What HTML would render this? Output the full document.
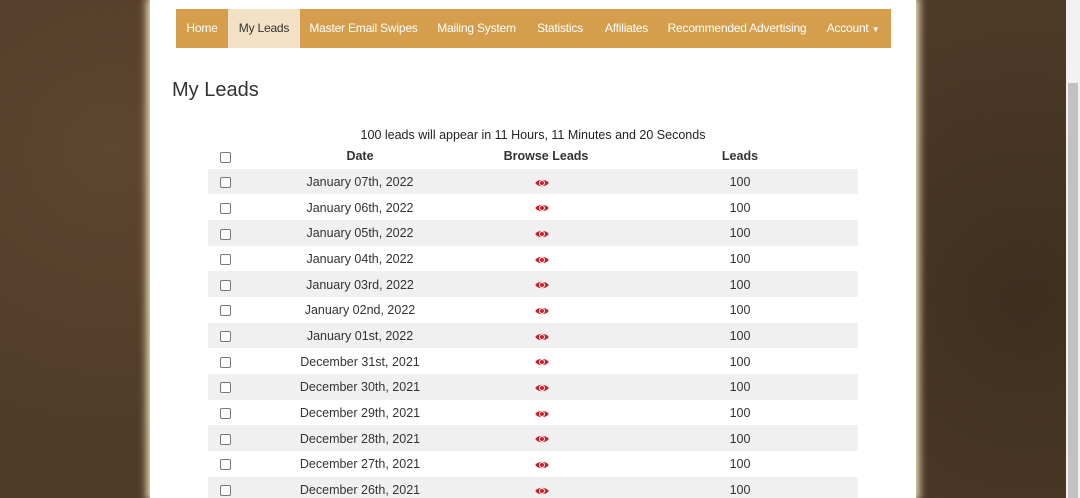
<!DOCTYPE html>
<html><head><style>
html,body{margin:0;height:498px;overflow:hidden;font-family:"Liberation Sans",sans-serif;}
body{background:#4f3b28;background-image:radial-gradient(circle at 10% 30%,#5e4630 0,transparent 30%),radial-gradient(circle at 95% 60%,#3f2e1f 0,transparent 30%);position:relative;width:1080px;}
.sb{position:absolute;left:1066px;top:0;width:14px;height:498px;background:#f1f1f1}
.sb .th{position:absolute;left:2px;top:83px;width:10px;height:415px;background:#c1c1c1}
.panel{position:absolute;left:150px;top:0;width:766px;height:498px;background:#fff;box-shadow:0 0 8px 3px #fbecc4;}
.nav{position:absolute;left:26px;top:9px;width:715px;height:39px;background:#d59e4d;font-size:12px;letter-spacing:-0.2px;color:#fff;}
.nav div{position:absolute;top:0;line-height:39px;white-space:nowrap;text-align:center}
.nav .act{background:#f3e1c6;color:#333}
h1{position:absolute;left:22px;top:79px;margin:0;font-weight:normal;font-size:20px;color:#333}
.note{position:absolute;left:58px;top:128px;width:650px;text-align:center;font-size:12.5px;color:#222}
table{position:absolute;left:58px;top:143px;width:650px;border-collapse:collapse;font-size:12.5px;color:#333}
td,th{height:25.67px;padding:1px 0 0;box-sizing:border-box;text-align:center}
th{font-weight:bold}
tr.g td{background:#f0f0f0}
.cb{display:inline-block;width:9px;height:9px;border:1px solid #777;border-radius:2px;background:#fff;vertical-align:middle}
</style></head><body>
<div class="panel">
<div class="nav">
<div style="left:0;width:52px">Home</div>
<div class="act" style="left:52px;width:72px">My Leads</div>
<div style="left:124px;width:127px">Master Email Swipes</div>
<div style="left:251px;width:99px">Mailing System</div>
<div style="left:350px;width:68px">Statistics</div>
<div style="left:418px;width:65px">Affiliates</div>
<div style="left:483px;width:156px">Recommended Advertising</div>
<div style="left:639px;width:76px">Account <span style="font-size:8px">▼</span></div>
</div>
<h1>My Leads</h1>
<div class="note">100 leads will appear in 11 Hours, 11 Minutes and 20 Seconds</div>
<table id="t">
<colgroup><col style="width:34px"><col style="width:236px"><col style="width:136px"><col style="width:244px"></colgroup>
<tr><th><span class="cb"></span></th><th>Date</th><th>Browse Leads</th><th style="padding-left:8px">Leads</th></tr>
</table>
</div>
<div class="sb"><div class="th"></div></div>
<script>
var d=["January 07th, 2022","January 06th, 2022","January 05th, 2022","January 04th, 2022","January 03rd, 2022","January 02nd, 2022","January 01st, 2022","December 31st, 2021","December 30th, 2021","December 29th, 2021","December 28th, 2021","December 27th, 2021","December 26th, 2021"];
var eye='<svg width="14" height="10" viewBox="0 0 14 10" style="vertical-align:middle;margin-left:-8px"><path d="M0.3 5C2.5 0.8 11.5 0.8 13.7 5C11.5 9.2 2.5 9.2 0.3 5Z" fill="#c9202a"/><circle cx="7" cy="5" r="3" fill="#fff"/><circle cx="7" cy="5" r="2" fill="#c9202a"/></svg>';
var h='';
d.forEach(function(x,i){h+='<tr'+(i%2==0?' class="g"':'')+'><td><span class="cb"></span></td><td>'+x+'</td><td>'+eye+'</td><td style="padding-left:8px">100</td></tr>'});
document.getElementById('t').insertAdjacentHTML('beforeend',h);
</script>
</body></html>
